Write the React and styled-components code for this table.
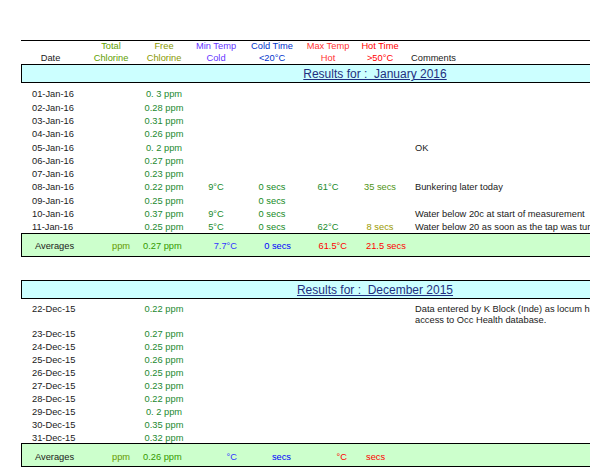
import React from "react";
import styled, { createGlobalStyle } from "styled-components";

const GlobalStyle = createGlobalStyle`
  html, body {
    margin: 0;
    padding: 0;
    overflow: hidden;
    background: #ffffff;
  }
  body {
    font-family: "Liberation Sans", Arial, sans-serif;
    font-size: 9.3px;
    color: #1a1a1a;
  }
`;

const COLS = "59px 62px 44px 60px 52px 60px 44px 1fr";

const january = [
  { date: "01-Jan-16", free: "0. 3 ppm" },
  { date: "02-Jan-16", free: "0.28 ppm" },
  { date: "03-Jan-16", free: "0.31 ppm" },
  { date: "04-Jan-16", free: "0.26 ppm" },
  { date: "05-Jan-16", free: "0. 2 ppm", comment: "OK" },
  { date: "06-Jan-16", free: "0.27 ppm" },
  { date: "07-Jan-16", free: "0.23 ppm" },
  {
    date: "08-Jan-16",
    free: "0.22 ppm",
    minT: "9°C",
    coldT: "0 secs",
    maxT: "61°C",
    hotT: "35 secs",
    hotColor: "#4f9414",
    comment: "Bunkering later today",
  },
  { date: "09-Jan-16", free: "0.25 ppm", coldT: "0 secs" },
  {
    date: "10-Jan-16",
    free: "0.37 ppm",
    minT: "9°C",
    coldT: "0 secs",
    comment: "Water below 20c at start of measurement",
  },
  {
    date: "11-Jan-16",
    free: "0.25 ppm",
    minT: "5°C",
    coldT: "0 secs",
    maxT: "62°C",
    hotT: "8 secs",
    hotColor: "#9a9a00",
    comment: "Water below 20 as soon as the tap was turned on",
  },
];

const december = [
  {
    date: "22-Dec-15",
    free: "0.22 ppm",
    tall: true,
    comment: [
      "Data entered by K Block (Inde) as locum has no",
      "access to Occ Health database.",
    ],
  },
  { date: "23-Dec-15", free: "0.27 ppm" },
  { date: "24-Dec-15", free: "0.25 ppm" },
  { date: "25-Dec-15", free: "0.26 ppm" },
  { date: "26-Dec-15", free: "0.25 ppm" },
  { date: "27-Dec-15", free: "0.23 ppm" },
  { date: "28-Dec-15", free: "0.22 ppm" },
  { date: "29-Dec-15", free: "0. 2 ppm" },
  { date: "30-Dec-15", free: "0.35 ppm" },
  { date: "31-Dec-15", free: "0.32 ppm" },
];

const sections = [
  {
    title: "Results for :  January 2016",
    rows: january,
    rowHeight: 13.3,
    gap: 0,
    avg: { free: "0.27 ppm", minT: "7.7°C", coldT: "0 secs", maxT: "61.5°C", hotT: "21.5 secs" },
  },
  {
    title: "Results for :  December 2015",
    rows: december,
    rowHeight: 13,
    gap: 23,
    avg: { free: "0.26 ppm", minT: "°C", coldT: "secs", maxT: "°C", hotT: "secs" },
  },
];

function App() {
  return (
    <>
      <GlobalStyle />
      <Sheet>
        <HeaderRow>
          <HeadCell>Date</HeadCell>
          <HeadCell $color="#5e9e00">
            Total
            <br />
            Chlorine
          </HeadCell>
          <HeadCell $color="#889800">
            Free
            <br />
            Chlorine
          </HeadCell>
          <HeadCell $color="#6633ff">
            Min Temp
            <br />
            Cold
          </HeadCell>
          <HeadCell $color="#0033cc">
            Cold Time
            <br />
            &lt;20°C
          </HeadCell>
          <HeadCell $color="#ff3333">
            Max Temp
            <br />
            Hot
          </HeadCell>
          <HeadCell $color="#ff0000">
            Hot Time
            <br />
            &gt;50°C
          </HeadCell>
          <HeadComment>Comments</HeadComment>
        </HeaderRow>

        {sections.map((s) => (
          <Section key={s.title} $gap={s.gap}>
            <ResultsBar>
              <ResultsTitle>{s.title}</ResultsTitle>
            </ResultsBar>
            <Rows>
              {s.rows.map((r) => (
                <DataRow key={r.date} $h={s.rowHeight} $tall={r.tall}>
                  <DateCell>{r.date}</DateCell>
                  <Cell />
                  <Cell $color="#23892f">{r.free}</Cell>
                  <Cell $color="#178a2a">{r.minT}</Cell>
                  <Cell $color="#168a1e">{r.coldT}</Cell>
                  <Cell $color="#178a2a">{r.maxT}</Cell>
                  <Cell $color={r.hotColor}>{r.hotT}</Cell>
                  <CommentCell>
                    {Array.isArray(r.comment)
                      ? r.comment.map((line) => <div key={line}>{line}</div>)
                      : r.comment}
                  </CommentCell>
                </DataRow>
              ))}
            </Rows>
            <AveragesRow>
              <AvgLabel>Averages</AvgLabel>
              <AvgCell $color="#669900">ppm</AvgCell>
              <AvgCell $color="#339900">{s.avg.free}</AvgCell>
              <AvgCell $color="#3333ff" $right>
                {s.avg.minT}
              </AvgCell>
              <AvgCell $color="#0000ff" $right>
                {s.avg.coldT}
              </AvgCell>
              <AvgCell $color="#ff0000" $right>
                {s.avg.maxT}
              </AvgCell>
              <AvgHot>{s.avg.hotT}</AvgHot>
            </AveragesRow>
          </Section>
        ))}
      </Sheet>
    </>
  );
}

export default App;

const Sheet = styled.div`
  width: 708px;
  margin-left: 21px;
  padding-top: 40px;
`;

const HeaderRow = styled.div`
  display: grid;
  grid-template-columns: ${COLS};
  align-items: end;
  height: 24px;
  border-top: 1px solid #000;
  box-sizing: border-box;
  padding-bottom: 1.5px;
  line-height: 11.5px;
`;

const HeadCell = styled.div`
  text-align: center;
  white-space: nowrap;
  color: ${(p) => p.$color || "#1a1a1a"};
`;

const HeadComment = styled.div`
  padding-left: 9px;
  white-space: nowrap;
`;

const Section = styled.div`
  margin-top: ${(p) => p.$gap}px;
`;

const ResultsBar = styled.div`
  display: flex;
  justify-content: center;
  align-items: center;
  height: 19px;
  box-sizing: border-box;
  padding-top: 1.5px;
  background: #ccffff;
  border: 1px solid #000;
`;

const ResultsTitle = styled.span`
  font-size: 12px;
  color: #1f2f80;
  text-decoration: underline;
  white-space: pre;
`;

const Rows = styled.div`
  display: flex;
  flex-direction: column;
  padding-top: 3.35px;
`;

const DataRow = styled.div`
  display: grid;
  grid-template-columns: ${COLS};
  height: ${(p) => (p.$tall ? 24.5 : p.$h)}px;
  line-height: ${(p) => (p.$tall ? "11px" : `${p.$h}px`)};
  align-items: start;
  padding-top: ${(p) => (p.$tall ? 2.5 : 2)}px;
  box-sizing: border-box;
`;

const Cell = styled.div`
  text-align: center;
  white-space: pre;
  color: ${(p) => p.$color || "#1a1a1a"};
`;

const DateCell = styled.div`
  padding-left: 11px;
  white-space: nowrap;
  color: #1a1a1a;
`;

const CommentCell = styled.div`
  padding-left: 13px;
  white-space: nowrap;
  color: #1a1a1a;
`;

const AveragesRow = styled.div`
  display: grid;
  grid-template-columns: 90px 31px 54px 40px 54px 56px 1fr;
  align-items: center;
  height: 24px;
  box-sizing: border-box;
  padding-top: 3px;
  background: #ccffcc;
  border: 1px solid #000;
`;

const AvgLabel = styled.div`
  padding-left: 13px;
  color: #1a1a1a;
`;

const AvgCell = styled.div`
  white-space: nowrap;
  text-align: ${(p) => (p.$right ? "right" : "left")};
  color: ${(p) => p.$color};
`;

const AvgHot = styled.div`
  padding-left: 19px;
  white-space: nowrap;
  color: #ff0000;
`;
